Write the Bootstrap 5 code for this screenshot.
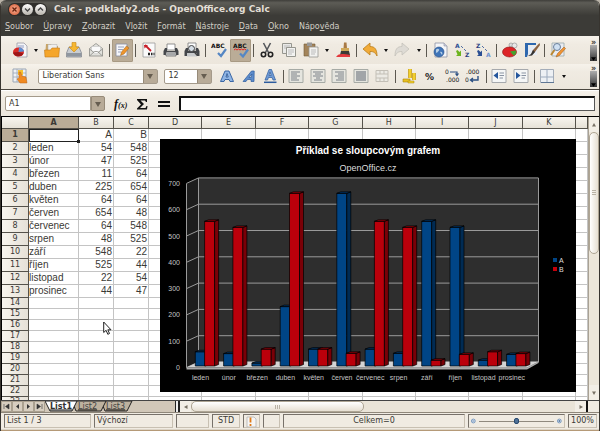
<!DOCTYPE html>
<html lang="cs">
<head>
<meta charset="utf-8">
<meta name="viewport" content="width=device-width, initial-scale=1">
<title>Calc - podklady2.ods - OpenOffice.org Calc</title>
<link href="https://cdn.jsdelivr.net/npm/bootstrap@5.3.0/dist/css/bootstrap.min.css" rel="stylesheet">
<style>
:root { --panel:#f0ebe2; --ink:#3a3935; --dark:#3c3b37; --tan:#baac97; --line:#55524b; }
body { font:8px/12px "DejaVu Sans",sans-serif; color:var(--ink); background:#b9b3a8; }
button { font:inherit; color:inherit; }
.app { height:100vh; background:var(--panel); border:solid #37342f; border-width:0 1px 0 1px; border-radius:6px 6px 0 0; }
.app > * { flex-shrink:0; }
.titlebar { height:18px; background:linear-gradient(#3f3e3a,#5d5c56 15%,var(--dark) 85%); color:#e3dfd6; font-size:9px; font-weight:700; padding-left:7px; gap:7px; }
.winbtns { background:#2f2e2b; border-radius:6px; padding:1px; gap:2px; }
.winbtns button { width:11px; height:11px; border-radius:50%; background:linear-gradient(#fff,#b8b4ac); }
.winbtns button.closer { background:radial-gradient(#f8b49a,#d3522a); }
.winbtns svg { width:9px; height:9px; display:block; margin:1px; }
.menubar { height:18px; background:var(--dark); padding:1px 4px 0; gap:10px; }
.menubar a { color:#d3cfc6; text-decoration:none; line-height:16px; }
.bar { background:linear-gradient(#f6f2eb,var(--panel) 30%,#ece6dc); }
.tb1 { height:28px; padding:0 2px 0 8px; }
.tb2 { height:26px; padding:0 2px 1px 8px; border-bottom:1px solid #4a463f; }
.tools { flex:0 1 560px; }
.tool { flex:1 1 20px; max-width:22px; height:23px; border-radius:1px; }
.tool.pressed { background:var(--tan); border:1px solid #a89a84; }
.tool svg { width:16px; height:16px; display:block; margin:auto; }
.drop { flex:0 0 11px; }
.drop::before { content:""; display:block; margin:auto; width:4px; border:solid transparent; border-width:3px 2px 0; border-top-color:#111; }
.rule { flex:0 0 5px; }
.rule::before { content:""; display:block; width:1px; height:13px; margin:auto; background:#5c5850; }
.more { width:7px; height:21px; line-height:6px; font-size:8px; font-weight:700; background:linear-gradient(var(--panel) 25%,#aaa 26%,#333); }
.combo { height:15px; border:1px solid #a49a8b; border-radius:2px; background:#fff; color:var(--ink); font:inherit; padding:0 3px; appearance:none; }
select.combo { background:url("data:image/svg+xml,%3Csvg xmlns='http://www.w3.org/2000/svg' viewBox='0 0 14 13'%3E%3Cpath fill='%23b8ab98' stroke='%23978b79' d='M.5-1h14v15H.5z'/%3E%3Cpath fill='%23665d50' d='M4 4h6l-3 5z'/%3E%3C/svg%3E") right center/14px 13px no-repeat #fff; }
.face { flex:0 1 120px; margin-right:6px; }
.size { flex:0 0 48px; margin-right:4px; }
.formula { height:27px; padding:0 4px; border-bottom:1px solid #000; border-top:1px solid #fff; }
.namebox { width:100px; height:15px; }
.namebox input { border-radius:2px 0 0 2px; width:86px; }
.namebox button { width:14px; height:15px; background:#b8ab98; border:1px solid #978b79; border-radius:0 2px 2px 0; }
.namebox svg { width:8px; height:8px; display:block; margin:auto; }
.fbtn { width:22px; height:18px; }
.fbtn svg { display:block; width:18px; height:16px; margin:auto; }
.entry { height:15px; border:1px solid #444; border-width:2px 1px 1px 2px; border-color:#111 #555 #555 #111; border-radius:0; background:#fff; }
.sheet { flex:1 1 0; border-left:1px solid #000; background:#fff; min-height:0; }
.cells { table-layout:fixed; width:100%; border-collapse:separate; border-spacing:0; }
.cells th,.cells td { padding:0; overflow:hidden; white-space:nowrap; border:solid #c4c4c4; border-width:0 1px 1px 0; line-height:10px; }
.cells thead th { height:12px; background:linear-gradient(#f8f5ef,#e6e1d7); border-color:var(--line); font-weight:400; text-align:center; }
.cells tbody th { background:linear-gradient(90deg,#f8f5ef,#e6e1d7); border-color:var(--line); font-weight:400; text-align:center; }
.cells tr.tall { height:13px; }
.cells tr.short { height:11px; }
.cells tr.tall td { font:10px/12px "Liberation Sans",sans-serif; }
.cells .num { text-align:right; padding-right:1px; }
.cells tr th.on { background:var(--tan); font-weight:700; }
.cells td.active { outline:1px solid #222; outline-offset:-1px; overflow:visible; position:relative; }
.cells td.active::after { content:""; position:absolute; right:-2px; bottom:-2px; width:3px; height:3px; background:#222; }
.c-head { width:27px; } .c-a { width:50px; } .c-n { width:35px; } .c-end { width:12px; }
.chart { left:158px; top:22px; width:416px; height:253px; background:#000; font-family:"Liberation Sans",sans-serif; }
.pointer { left:101px; top:204px; width:9px; height:14px; }
.vbar { flex:0 0 11px; background:#ece6da; border-left:1px solid #aaa294; }
.sarrow { height:15px; background:#f2eee6; }
.sarrow svg,.harrow svg { width:6px; height:6px; display:block; margin:auto; }
.vthumb { flex:0 0 43%; border:1px solid #aea594; border-radius:5px; background:linear-gradient(90deg,#fff,#e6dfd2); }
.vgrip { width:4px; height:5px; background:repeating-linear-gradient(#b9b2a5 0 1px,transparent 1px 2px); }
.tabs { height:12px; background:#c3b8a6; border-top:1px solid #444; }
.navs button { width:11px; height:11px; background:#d6cdbf; border:1px solid #aaa08f; }
.navs svg { width:7px; height:7px; display:block; margin:auto; }
.sheettabs { width:130px; background:#d1c7b8; }
.sheettabs svg { width:88px; height:11px; display:block; }
.split { width:5px; border:1px solid #222; border-width:0 2px 0 1px; background:#eee; }
.harrow { width:11px; background:#f2eee6; }
.track { background:#eae4d8; }
.hthumb { flex:0 0 45%; border:1px solid #aea594; border-radius:5px; background:linear-gradient(#fff,#e6dfd2); }
.hgrip { width:5px; height:4px; background:repeating-linear-gradient(90deg,#b9b2a5 0 1px,transparent 1px 2px); }
.corner { width:13px; background:linear-gradient(90deg,#111 2px,var(--panel) 2px); }
.status { padding:1px 2px 0 3px; gap:3px; height:17px; border-top:1px solid #8f877a; }
.status > div { border:1px solid #857e72; border-color:#77716a #c8c0b2 #c8c0b2 #77716a; line-height:12px; height:14px; padding:0 2px; white-space:nowrap; }
.s1 { width:87px; } .s2 { width:79px; } .s3 { width:33px; } .s4 { width:28px; } .s5 { width:17px; } .s6 { width:17px; } .s8 { width:97px; } .s9 { width:29px; }
.status .s9 { padding:0; }
.s5 svg { width:11px; height:11px; }
.zoomer svg { width:8px; height:8px; display:block; }
.zoomer input { appearance:none; background:linear-gradient(#8f897e,#8f897e) center/100% 1px no-repeat; height:8px; min-width:0; margin:0 3px; }
.zoomer input::-webkit-slider-thumb { appearance:none; width:5px; height:6px; border-radius:2px; background:#4f7197; border:1px solid #27496f; }
.foot { height:2px; border-bottom:1px solid #b59a78; background:#dcd4c6; }
</style>
<script src="https://cdn.jsdelivr.net/npm/bootstrap@5.3.0/dist/js/bootstrap.bundle.min.js"></script>
</head>
<body>
<div class="app d-flex flex-column overflow-hidden">

<header class="titlebar d-flex align-items-center">
  <div class="winbtns d-flex">
    <button class="closer border-0 p-0" aria-label="Zavřít"><svg viewBox="0 0 9 9"><path d="M2.5 2.5l4 4m0-4l-4 4" stroke="#6a2410" stroke-width="1.3"/></svg></button>
    <button class="border-0 p-0" aria-label="Minimalizovat"><svg viewBox="0 0 9 9"><path d="M2 3.5l2.500 2.500 2.500-2.500" fill="none" stroke="#444" stroke-width="1.3"/></svg></button>
    <button class="border-0 p-0" aria-label="Maximalizovat"><svg viewBox="0 0 9 9"><path d="M2 5.500l2.500-2.500 2.500 2.500" fill="none" stroke="#444" stroke-width="1.3"/></svg></button>
  </div>
  <span class="text-nowrap">Calc - podklady2.ods - OpenOffice.org Calc</span>
</header>

<nav class="menubar d-flex">
  <a href="#"><u>S</u>oubor</a><a href="#"><u>Ú</u>pravy</a><a href="#"><u>Z</u>obrazit</a><a href="#">V<u>l</u>ožit</a><a href="#"><u>F</u>ormát</a><a href="#"><u>N</u>ástroje</a><a href="#"><u>D</u>ata</a><a href="#"><u>O</u>kno</a><a href="#">Nápo<u>v</u>ěda</a>
</nav>

<div class="bar tb1 d-flex align-items-center justify-content-between">
  <div class="tools d-flex align-items-center">
    <button class="tool border-0 p-0 bg-transparent" aria-label="Nový"><svg viewBox="0 0 16 16"><path d="M5 1h7l3 3v11H5z" fill="#f4f4f6" stroke="#9a9aa5" stroke-width=".8"/><path d="M6 3h6v3H6z" fill="#c3c9dd"/><ellipse cx="6.500" cy="10" rx="5.500" ry="4.500" fill="#d92b27"/><path d="M6.500 10L7 5.500a5 4 0 015 4z" fill="#5c8fd2"/><path d="M1 10.500a5.500 4.500 0 0010.500 1L6.500 10z" fill="#9c1619"/></svg></button>
    <button class="drop border-0 p-0 bg-transparent" aria-label="Další typy"></button>
    <button class="tool border-0 p-0 bg-transparent" aria-label="Otevřít"><svg viewBox="0 0 16 16"><path d="M2 2h5l1 2h6v10H1z" fill="#c9a566"/><path d="M4 2.500h9v7H4z" fill="#eee" stroke="#aaa" stroke-width=".5"/><path d="M.5 8h6l1.500-2h7.500l-.8 9H1z" fill="#f5a62b" stroke="#c27a18" stroke-width=".6"/></svg></button>
    <button class="tool border-0 p-0 bg-transparent" aria-label="Uložit"><svg viewBox="0 0 16 16"><path d="M3 5h10l2.500 6v4H.5v-4z" fill="#c9cdd2" stroke="#777d86" stroke-width=".7"/><path d="M1 11h14v3.500H1z" fill="#8f969f"/><path d="M6 .5h4V5h3L8 10 3 5h3z" fill="#f7b731" stroke="#c88715" stroke-width=".6"/></svg></button>
    <button class="tool border-0 p-0 bg-transparent" aria-label="Odeslat e-mailem"><svg viewBox="0 0 16 16"><path d="M1.500 6.500L8 1.500l6.500 5V14h-13z" fill="#e2e2dd" stroke="#8b8b86" stroke-width=".8"/><path d="M3.500 4.500h9V9L8 12 3.500 9z" fill="#fafafa" stroke="#bbb" stroke-width=".5"/><path d="M1.500 14L6.500 9.500h3L14.500 14M1.500 7L6 10.500M14.500 7L10 10.500" fill="none" stroke="#8b8b86" stroke-width=".8"/></svg></button>
    <span class="rule"></span>
    <button class="tool pressed p-0" aria-label="Upravit soubor"><svg viewBox="0 0 16 16"><path d="M2 2h11v12H2z" fill="#f5f6fa" stroke="#888da0" stroke-width=".8"/><path d="M4 5h6M4 7.500h5M4 10h3" stroke="#9aa3bb"/><path d="M12.500 4l2.500 2-5 6-3.500 1.500L7.500 10z" fill="#f0952b" stroke="#98601b" stroke-width=".5"/></svg></button>
    <span class="rule"></span>
    <button class="tool border-0 p-0 bg-transparent" aria-label="Export do PDF"><svg viewBox="0 0 16 16"><path d="M2 1h12v14H2z" fill="#fafafa" stroke="#999" stroke-width=".8"/><path d="M4 3l6 6" stroke="#c81e28" stroke-width="1.800"/><path d="M3 3h4L3.500 6.500z" fill="#c81e28"/><path d="M7 12h2m1 0h1.500m1 0h1" stroke="#222" stroke-width="2.500"/></svg></button>
    <button class="tool border-0 p-0 bg-transparent" aria-label="Tisk"><svg viewBox="0 0 16 16"><path d="M4 2h8v6H4z" fill="#fff" stroke="#777" stroke-width=".8"/><path d="M2 6h2v3h8V6h2l1.500 3v4H.5V9z" fill="#44464a"/><path d="M3 10h10v4H3z" fill="#d7d9db" stroke="#555" stroke-width=".7"/><path d="M4 12h8" stroke="#777"/></svg></button>
    <button class="tool border-0 p-0 bg-transparent" aria-label="Náhled"><svg viewBox="0 0 16 16"><path d="M4 1h8v7H4z" fill="#fff" stroke="#777" stroke-width=".8"/><path d="M2 6h2v3h8V6h2l1.500 3v5H.5V9z" fill="#44464a"/><path d="M3 11h10v3.500H3z" fill="#c7c9cb"/><circle cx="7.500" cy="6.500" r="3" fill="#d5dde5" stroke="#444"/><path d="M9.500 9l4 4.500" stroke="#444" stroke-width="1.600"/></svg></button>
    <span class="rule"></span>
    <button class="tool border-0 p-0 bg-transparent" aria-label="Kontrola pravopisu"><svg viewBox="0 0 16 16"><text x="0" y="6" font-size="6" font-weight="700" fill="#111">ABC</text><path d="M7 11l3 3 5-7" fill="none" stroke="#5587c4" stroke-width="2.200"/></svg></button>
    <button class="tool pressed p-0" aria-label="Automatická kontrola"><svg viewBox="0 0 16 16"><text x="0" y="6" font-size="6" font-weight="700" fill="#111">ABC</text><path d="M1 8l1.500-1L4 8l1.500-1L7 8l1.500-1L10 8l1.500-1L13 8" fill="none" stroke="#d22"/><path d="M7 11.500l3 3 5-7" fill="none" stroke="#5587c4" stroke-width="2.200"/></svg></button>
    <span class="rule"></span>
    <button class="tool border-0 p-0 bg-transparent" aria-label="Vyjmout"><svg viewBox="0 0 16 16"><path d="M4.500 1l5 9.500M11.500 1l-5 9.500" stroke="#55585c" stroke-width="1.600"/><circle cx="4.500" cy="12.500" r="2.200" fill="none" stroke="#222" stroke-width="1.600"/><circle cx="11.500" cy="12.500" r="2.200" fill="none" stroke="#222" stroke-width="1.600"/></svg></button>
    <button class="tool border-0 p-0 bg-transparent" aria-label="Kopírovat"><svg viewBox="0 0 16 16"><path d="M1.500 1.500h9v10h-9z" fill="#e9e9e7" stroke="#96968f"/><path d="M3 4h6M3 6h6" stroke="#bbb"/><path d="M5.500 5.500h9v9h-9z" fill="#f3f3f1" stroke="#96968f"/><path d="M7 8h6M7 10h6M7 12h4" stroke="#bbb"/></svg></button>
    <button class="tool border-0 p-0 bg-transparent" aria-label="Vložit"><svg viewBox="0 0 16 16"><path d="M1 2h11v12H1z" fill="#a3845a" stroke="#735a36" stroke-width=".6"/><path d="M4 .5h5V4H4z" fill="#999"/><path d="M6 5h9v10H6z" fill="#f2f2f0" stroke="#96968f" stroke-width=".8"/><path d="M8 8h5M8 10h5M8 12h4" stroke="#bbb"/></svg></button>
    <button class="drop border-0 p-0 bg-transparent" aria-label="Možnosti vložení"></button>
    <button class="tool border-0 p-0 bg-transparent" aria-label="Štětec formátu"><svg viewBox="0 0 16 16"><path d="M9 .5h2.500l.5 6H8.500z" fill="#a87a45"/><path d="M6 6h8v3H6z" fill="#cfa95a"/><path d="M6 9h8l1 4H5z" fill="#3c3934"/><path d="M1 15c3-4 7-3 14-2v2z" fill="#e3393d"/></svg></button>
    <span class="rule"></span>
    <button class="tool border-0 p-0 bg-transparent" aria-label="Zpět"><svg viewBox="0 0 16 16"><path d="M1 7l7-6v3.500c5 0 7 3 7 9.500-2-4-4-4.500-7-4.500V13z" fill="#f1ab38" stroke="#b97d1c" stroke-width=".8"/></svg></button>
    <button class="drop border-0 p-0 bg-transparent" aria-label="Historie zpět"></button>
    <button class="tool border-0 p-0 bg-transparent" aria-label="Znovu"><svg viewBox="0 0 16 16"><path d="M15 7L8 1v3.500c-5 0-7 3-7 9.500 2-4 4-4.500 7-4.500V13z" fill="#dedbd5" stroke="#c4c1ba" stroke-width=".8"/></svg></button>
    <button class="drop border-0 p-0 bg-transparent" aria-label="Historie znovu"></button>
    <span class="rule"></span>
    <button class="tool border-0 p-0 bg-transparent" aria-label="Odkaz"><svg viewBox="0 0 16 16"><path d="M3 1h9l3 3v11H3z" fill="#f4f5f8" stroke="#8d93a3" stroke-width=".8"/><path d="M12 1v3h3" fill="#ccd" stroke="#8d93a3" stroke-width=".6"/><circle cx="7" cy="10" r="5" fill="#3f74b8" stroke="#244d86" stroke-width=".6"/><path d="M4 7.500c2-2 4 0 3 1s-2 3-3 2zM8 10c2-1 3 1 2 3z" fill="#b5cfe8"/></svg></button>
    <button class="tool border-0 p-0 bg-transparent" aria-label="Seřadit vzestupně"><svg viewBox="0 0 16 16"><text x="1" y="5.500" font-size="6" font-weight="700" fill="#2b4f93">A</text><text x="11" y="14.500" font-size="6" font-weight="700" fill="#2b3f83">Z</text><path d="M7 4l2 2m1 1l2 2" stroke="#2b4f93" stroke-width=".8"/><path d="M2 9l1.500-1 2 2 1.500-1.500V14H2l1.500-1.500z" fill="#6db41f"/></svg></button>
    <button class="tool border-0 p-0 bg-transparent" aria-label="Seřadit sestupně"><svg viewBox="0 0 16 16"><text x="1" y="5.500" font-size="6" font-weight="700" fill="#2b3f83">Z</text><text x="11" y="14.500" font-size="6" font-weight="700" fill="#6e93cf">A</text><path d="M7 4l2 2m1 1l2 2" stroke="#2b4f93" stroke-width=".8"/><path d="M2 9l1.500-1 2 2 1.500-1.500V14H2l1.500-1.500z" fill="#2b4f93"/></svg></button>
    <span class="rule"></span>
    <button class="tool border-0 p-0 bg-transparent" aria-label="Graf"><svg viewBox="0 0 16 16"><circle cx="9" cy="3" r="2" fill="#ddd" stroke="#888" stroke-width=".6"/><circle cx="12.500" cy="3.500" r="2.500" fill="#e8e8e8" stroke="#888" stroke-width=".6"/><ellipse cx="7.500" cy="10" rx="7" ry="5" fill="#dd2427" stroke="#8d1518" stroke-width=".6"/><path d="M8 9.500l6-1c.8 3-1 4.500-2.500 5z" fill="#45a12d"/></svg></button>
    <button class="tool border-0 p-0 bg-transparent" aria-label="Kreslení"><svg viewBox="0 0 16 16"><path d="M1 1h11v2H4v9l-1 3H1z" fill="#2e67ad"/><path d="M4 4h9v9H4z" fill="#e5ebf4"/><path d="M15.500 1L9 8l-2 5 4-3 5-7z" fill="#8b6240"/><path d="M9 8l2 2-3 3.500-4 .5 3-2z" fill="#333"/></svg></button>
    <span class="rule"></span>
    <button class="tool border-0 p-0 bg-transparent" aria-label="Najít a nahradit"><svg viewBox="0 0 16 16"><path d="M2 1h12v13H2z" fill="#e9ecf2" stroke="#9aa" stroke-width=".8"/><circle cx="7" cy="5" r="3.500" fill="#cfe0f2" stroke="#6a7f9a"/><path d="M4.500 8L1 13" stroke="#b98732" stroke-width="2"/><path d="M14 5l1.500 1.500-6 7L6 15l1.500-3.500z" fill="#f09332" stroke="#985a1b" stroke-width=".5"/></svg></button>
  </div>
  <button class="more border-0 p-0 d-flex flex-column justify-content-between align-items-center" aria-label="Další"><span>»</span><svg viewBox="0 0 6 4" width="5" height="4"><path d="M0 0h6L3 4z" fill="#000"/></svg></button>
</div>

<div class="bar tb2 d-flex align-items-center justify-content-between">
  <div class="tools d-flex align-items-center">
    <button class="tool border-0 p-0 me-2 bg-transparent" aria-label="Styly"><svg viewBox="0 0 16 16"><path d="M1 1h13v13H1z" fill="#eef1f5" stroke="#9ba6b5"/><path d="M1 5h13M1 9h13M5 1v13M10 1v13" stroke="#9ba6b5" stroke-width=".8"/><path d="M6 2h5v5H6z" fill="#f7c12f"/><path d="M7 4l1.500 0 1.500 4 4 1 1 6H8l-3-4 2-1z" fill="#f18a21" stroke="#b9621a" stroke-width=".5"/></svg></button>
    <select class="combo face" aria-label="Název písma"><option>Liberation Sans</option></select>
    <select class="combo size" aria-label="Velikost písma"><option>12</option></select>
    <button class="tool border-0 p-0 bg-transparent" aria-label="Tučné"><svg viewBox="0 0 16 16"><path d="M1.500 13.500L6 3h4l4.500 10.500H11L10 11.500H6l-1 2zM7 9h2.200L8 5.500z" fill="#8fb4e3" stroke="#2d5c9e" stroke-width=".9" fill-rule="evenodd"/></svg></button>
    <button class="tool border-0 p-0 bg-transparent" aria-label="Kurzíva"><svg viewBox="0 0 16 16"><path d="M2 13.500L10.500 3h2.700L13 13.500h-3l.1-2H6.500L5 13.500zM8 9.500h2.200L11 6z" fill="#5d8ccb" stroke="#2d5c9e" stroke-width=".7" fill-rule="evenodd"/></svg></button>
    <button class="tool border-0 p-0 bg-transparent" aria-label="Podtržené"><svg viewBox="0 0 16 16"><path d="M3 12L7 1.500h2.500L13.500 12H11l-1-2.500H6.500l-1 2.500zM7 7.500h2.200L8 4z" fill="#6f9ad4" stroke="#2d5c9e" stroke-width=".7" fill-rule="evenodd"/><path d="M2 14.300h12.500" stroke="#2d5c9e" stroke-width="1.500"/></svg></button>
    <span class="rule"></span>
    <button class="tool border-0 p-0 bg-transparent" aria-label="Vlevo"><svg viewBox="0 0 16 16"><path d="M1 1.500h14v13H1z" fill="#e5e5df" stroke="#a6aaa5"/><path d="M3 4h9M3 6h6M3 8h9M3 10h6M3 12h8" stroke="#7c8289"/></svg></button>
    <button class="tool border-0 p-0 bg-transparent" aria-label="Na střed"><svg viewBox="0 0 16 16"><path d="M1 1.500h14v13H1z" fill="#e5e5df" stroke="#a6aaa5"/><path d="M3 4h10M5 6h6M3 8h10M6 10h4M4 12h8" stroke="#7c8289"/></svg></button>
    <button class="tool border-0 p-0 bg-transparent" aria-label="Vpravo"><svg viewBox="0 0 16 16"><path d="M1 1.500h14v13H1z" fill="#e5e5df" stroke="#a6aaa5"/><path d="M4 4h9M7 6h6M4 8h9M7 10h6M5 12h8" stroke="#7c8289"/></svg></button>
    <button class="tool border-0 p-0 bg-transparent" aria-label="Do bloku"><svg viewBox="0 0 16 16"><path d="M1 1.500h14v13H1z" fill="#e5e5df" stroke="#a6aaa5"/><path d="M3 4h10M3 6h10M3 8h10M3 10h10M3 12h10" stroke="#8a9096" stroke-width="1.400"/></svg></button>
    <button class="tool border-0 p-0 bg-transparent" aria-label="Sloučit buňky"><svg viewBox="0 0 16 16"><path d="M2 2.500h12v11H2zM2 6h12M2 10h12M6 2.500V6M10 2.500V6M6 10v3.500M10 10v3.500" fill="#eceae4" stroke="#c3bfb6"/></svg></button>
    <span class="rule"></span>
    <button class="tool border-0 p-0 bg-transparent" aria-label="Měna"><svg viewBox="0 0 16 16"><path d="M9 1v9M13 5v7" stroke="#c39a0e" stroke-width="3.600"/><path d="M9 1v9M13 5v7" stroke="#f2cf2d" stroke-width="2.200"/><path d="M2 11h7v3H2z" fill="#e8c021" stroke="#a9850c" stroke-width=".6"/><path d="M7 13h6v2H7z" fill="#f2cf2d" stroke="#a9850c" stroke-width=".5"/></svg></button>
    <button class="tool border-0 p-0 bg-transparent" aria-label="Procento"><svg viewBox="0 0 16 16"><text x="3" y="11.500" font-size="9" font-weight="700" fill="#222">%</text></svg></button>
    <button class="tool border-0 p-0 bg-transparent" aria-label="Přidat desetinné místo"><svg viewBox="0 0 16 16"><text x="1" y="6" font-size="6" fill="#222">0</text><path d="M6 4h7v3m-1.500-1.500L13 7.500l1.500-2" fill="none" stroke="#2b4f83" stroke-width="1.200"/><text x="2" y="14" font-size="6" fill="#111">.000</text></svg></button>
    <button class="tool border-0 p-0 bg-transparent" aria-label="Odstranit desetinné místo"><svg viewBox="0 0 16 16"><text x="1" y="6" font-size="6" fill="#111">.000</text><text x="0" y="14" font-size="6" fill="#222">0</text><path d="M13 8v4H6m2-2l-2.500 2L8 14" fill="none" stroke="#2b4f83" stroke-width="1.400"/></svg></button>
    <span class="rule"></span>
    <button class="tool border-0 p-0 bg-transparent" aria-label="Zmenšit odsazení"><svg viewBox="0 0 16 16"><path d="M1 1.500h14v13H1z" fill="#f5f6f6" stroke="#a6a9ad"/><path d="M7 4v7L2.500 7.500z" fill="#24559c"/><path d="M8.500 5H13M8.500 7.500H13M8.500 10H12" stroke="#8a94a3"/></svg></button>
    <button class="tool border-0 p-0 bg-transparent" aria-label="Zvětšit odsazení"><svg viewBox="0 0 16 16"><path d="M1 1.500h14v13H1z" fill="#f5f6f6" stroke="#a6a9ad"/><path d="M3 4v7l4.500-3.500z" fill="#24559c"/><path d="M8.500 5H13M8.500 7.500H13M8.500 10H12" stroke="#8a94a3"/></svg></button>
    <span class="rule"></span>
    <button class="tool border-0 p-0 bg-transparent" aria-label="Ohraničení"><svg viewBox="0 0 16 16"><path d="M1.500 1.500h13v13h-13z" fill="#edf0f4" stroke="#a4adb9"/><path d="M8 1.500v13M1.500 9h13" stroke="#9dabbe"/><path d="M2 14.500h13" stroke="#5f7694" stroke-width="1.200"/></svg></button>
    <button class="drop border-0 p-0 bg-transparent" aria-label="Typy ohraničení"></button>
  </div>
  <button class="more border-0 p-0 d-flex flex-column justify-content-between align-items-center" aria-label="Další"><span>»</span><svg viewBox="0 0 6 4" width="5" height="4"><path d="M0 0h6L3 4z" fill="#000"/></svg></button>
</div>

<div class="formula bar d-flex align-items-center">
  <div class="namebox d-flex">
    <input class="combo" value="A1" aria-label="Oblast">
    <button class="p-0" aria-label="Vybrat oblast"><svg viewBox="0 0 8 8"><path d="M1 2h6L4 7z" fill="#665d50"/></svg></button>
  </div>
  <button class="fbtn border-0 p-0 ms-1 bg-transparent" aria-label="Průvodce funkcí"><svg viewBox="0 0 18 16"><g font-family="Liberation Serif,serif" font-style="italic" font-weight="700" fill="#111"><text x="3" y="12" font-size="12">f</text><text x="7" y="12" font-size="8">(x)</text></g></svg></button>
  <button class="fbtn border-0 p-0 bg-transparent" aria-label="Součet"><svg viewBox="0 0 18 16"><path d="M4 3h10v3h-1l-1-1.500H7.500L11 8l-4 4h5.500L13.500 10h1L14 13.500H4v-1L8 8.500 4 4z" fill="#111"/></svg></button>
  <button class="fbtn border-0 p-0 me-1 bg-transparent" aria-label="Funkce"><svg viewBox="0 0 18 16"><path d="M3 6h12M3 10h12" stroke="#111" stroke-width="1.800"/></svg></button>
  <input class="entry flex-grow-1" aria-label="Vstupní řádek">
</div>

<main class="sheet d-flex">
  <div class="position-relative overflow-hidden flex-grow-1">
    <table class="cells">
      <colgroup><col class="c-head"><col class="c-a"><col class="c-n"><col class="c-n"><col span="8"><col class="c-end"></colgroup>
      <thead><tr><th></th><th class="on">A</th><th>B</th><th>C</th><th>D</th><th>E</th><th>F</th><th>G</th><th>H</th><th>I</th><th>J</th><th>K</th><th></th></tr></thead>
      <tbody id="rows"></tbody>
    </table>
    <svg class="chart position-absolute" viewBox="160 139 416 253" role="img" aria-label="Příklad se sloupcovým grafem">
      <text x="368" y="154" font-size="10" font-weight="700" fill="#fff" text-anchor="middle">Příklad se sloupcovým grafem</text>
      <text x="368" y="171" font-size="9" fill="#ddd" text-anchor="middle">OpenOffice.cz</text>
      <path d="M198.500 178H538.500V362h-340z" fill="#2e2e2e"/>
      <path d="M186.500 183.500l12-5.500v184l-12 6z" fill="#1d1d1d"/>
      <g id="grid" fill="none" stroke="#9a9a9a"></g>
      <path d="M186.500 367.500l12-5.800h340l-11.500 6z" fill="#d4d4d4"/>
      <path d="M186.500 367.500h340.500l11.500-6v1.500l-11.500 6.500H186.500z" fill="#a9a9a9"/>
      <g id="bars" stroke="#000" stroke-width=".7"></g>
      <g id="labels" font-size="7" fill="#c4c4c4"></g>
      <path d="M553 258h4v4h-4z" fill="#004586"/><path d="M553 267h4v4h-4z" fill="#c5000b"/>
      <text x="559" y="263" font-size="7" fill="#ddd">A</text><text x="559" y="272" font-size="7" fill="#ddd">B</text>
    </svg>
    <svg class="pointer position-absolute" viewBox="0 0 9 14"><path d="M.7 1v10.500l2.400-2.200 1.700 4 1.700-.8-1.700-3.700h3.200z" fill="#fff" stroke="#222"/></svg>
  </div>
  <div class="vbar d-flex flex-column">
    <button class="sarrow border-0 p-0" aria-label="Nahoru"><svg viewBox="0 0 6 6"><path d="M1 4.500h4L3 1z" fill="#777064"/></svg></button>
    <div class="vthumb d-flex align-items-center justify-content-center"><span class="vgrip"></span></div>
    <button class="sarrow border-0 p-0 mt-auto" aria-label="Dolů"><svg viewBox="0 0 6 6"><path d="M1 1.500h4L3 5z" fill="#777064"/></svg></button>
  </div>
</main>

<div class="tabs d-flex">
  <div class="navs d-flex">
    <button class="p-0" aria-label="První list"><svg viewBox="0 0 7 7"><path d="M1 1v5M6 1v5L2.500 3.500z" fill="#333" stroke="#333" stroke-width=".6"/></svg></button>
    <button class="p-0" aria-label="Předchozí list"><svg viewBox="0 0 7 7"><path d="M5 1v5L2 3.500z" fill="#333"/></svg></button>
    <button class="p-0" aria-label="Další list"><svg viewBox="0 0 7 7"><path d="M2 1v5l3-2.500z" fill="#333"/></svg></button>
    <button class="p-0" aria-label="Poslední list"><svg viewBox="0 0 7 7"><path d="M6 1v5M1 1v5l3.500-2.500z" fill="#333" stroke="#333" stroke-width=".6"/></svg></button>
  </div>
  <div class="sheettabs">
    <svg viewBox="0 0 88 11"><path d="M56 0l4 10h22l5-10z" fill="#bdb19e" stroke="#222"/><path d="M27 0l4 10h25l5-10z" fill="#bdb19e" stroke="#222"/><path d="M0 0l5 10h22l5-10z" fill="#fff" stroke="#222"/><a href="#"><text x="5" y="7.500" font-size="8" font-weight="700" fill="#333">List1</text></a><a href="#"><text x="33" y="7.500" font-size="8" fill="#444">List2</text></a><a href="#"><text x="61" y="7.500" font-size="8" fill="#444">List3</text></a></svg>
  </div>
  <div class="split"></div>
  <button class="harrow border-0 p-0" aria-label="Vlevo"><svg viewBox="0 0 6 6"><path d="M4.500 1v4L1 3z" fill="#777064"/></svg></button>
  <div class="track d-flex flex-grow-1"><div class="hthumb d-flex align-items-center justify-content-center"><span class="hgrip"></span></div></div>
  <button class="harrow border-0 p-0" aria-label="Vpravo"><svg viewBox="0 0 6 6"><path d="M1.500 1v4L5 3z" fill="#777064"/></svg></button>
  <div class="corner"></div>
</div>

<footer class="status d-flex">
  <div class="s1">List 1 / 3</div>
  <div class="s2">Výchozí</div>
  <div class="s3"></div>
  <div class="s4 text-center">STD</div>
  <div class="s5 d-flex align-items-center justify-content-center"><svg viewBox="0 0 11 11"><path d="M1 1h7l2 2v8H1z" fill="#f5f5f5" stroke="#aaa" stroke-width=".7"/><path d="M4.500 1.500v5m0 1.500v2" stroke="#e07a16" stroke-width="1.800"/></svg></div>
  <div class="s6"></div>
  <div class="flex-grow-1 text-center">Celkem=0</div>
  <div class="s8 zoomer d-flex align-items-center"><svg viewBox="0 0 8 8"><circle cx="4" cy="4" r="3.300" fill="#dfe9f4" stroke="#3a6aa3"/><path d="M2.300 4h3.400" stroke="#224f86"/></svg><input class="flex-grow-1" type="range" min="0" max="100" value="50" aria-label="Lupa"><svg viewBox="0 0 8 8"><circle cx="4" cy="4" r="3.300" fill="#dfe9f4" stroke="#3a6aa3"/><path d="M2.300 4h3.400M4 2.300v3.400" stroke="#224f86"/></svg></div>
  <div class="s9 text-center">100%</div>
</footer>
<div class="foot"></div>
</div>

<script>
const data = [["leden",54,548],["únor",47,525],["březen",11,64],["duben",225,654],["květen",64,64],["červen",654,48],["červenec",64,548],["srpen",48,525],["září",548,22],["říjen",525,44],["listopad",22,54],["prosinec",44,47]];

const table = [["", "A", "B"], ...data];
let html = "";
for (let r = 0; r < 23; r++) {
  const row = table[r] || ["", "", ""];
  html += `<tr class="${r < 13 ? "tall" : "short"}"><th${r ? "" : ' class="on"'}>${r + 1}</th><td${r ? "" : ' class="active"'}>${row[0]}</td><td class="num">${row[1]}</td><td class="num">${row[2]}</td>${"<td></td>".repeat(9)}</tr>`;
}
document.getElementById("rows").innerHTML = html;

// Value axis: grid lines run along the side wall, then across the back wall.
let grid = '<path d="M186.500 183.500V367.500M198.500 178V362M538.500 178V362"/>', labels = "", bars = "";
for (let v = 0; v <= 700; v += 100) {
  const front = 367.5 - v * 0.263, back = 362 - v * 0.263;
  grid += `<path d="M186.500 ${front}L198.500 ${back}H538.500"/>`;
  labels += `<text x="180" y="${front + 2.5}" text-anchor="end">${v}</text>`;
}
// A column is a front face, a right side and a top.
function column(x, value, [face, side, top]) {
  const y = 366 - value * 0.264, w = 10;
  return `<path fill="${face}" d="M${x} ${y}h${w}V366H${x}z"/><path fill="${side}" d="M${x + w} ${y}l4-1.500V364.500l-4 1.500z"/><path fill="${top}" d="M${x} ${y}l4-1.500h${w}l-4 1.500z"/>`;
}
data.forEach(([name, a, b], i) => {
  const x = 195.3 + i * 28.3;
  bars += column(x, a, ["#004586", "#002b54", "#00376b"]) + column(x + 9.300, b, ["#bb000b", "#7a0007", "#980008"]);
  labels += `<text x="${200.500 + i * 28.3}" y="380" text-anchor="middle">${name}</text>`;
});
document.getElementById("grid").innerHTML = grid;
document.getElementById("bars").innerHTML = bars;
document.getElementById("labels").innerHTML = labels;
</script>
</body>
</html>
